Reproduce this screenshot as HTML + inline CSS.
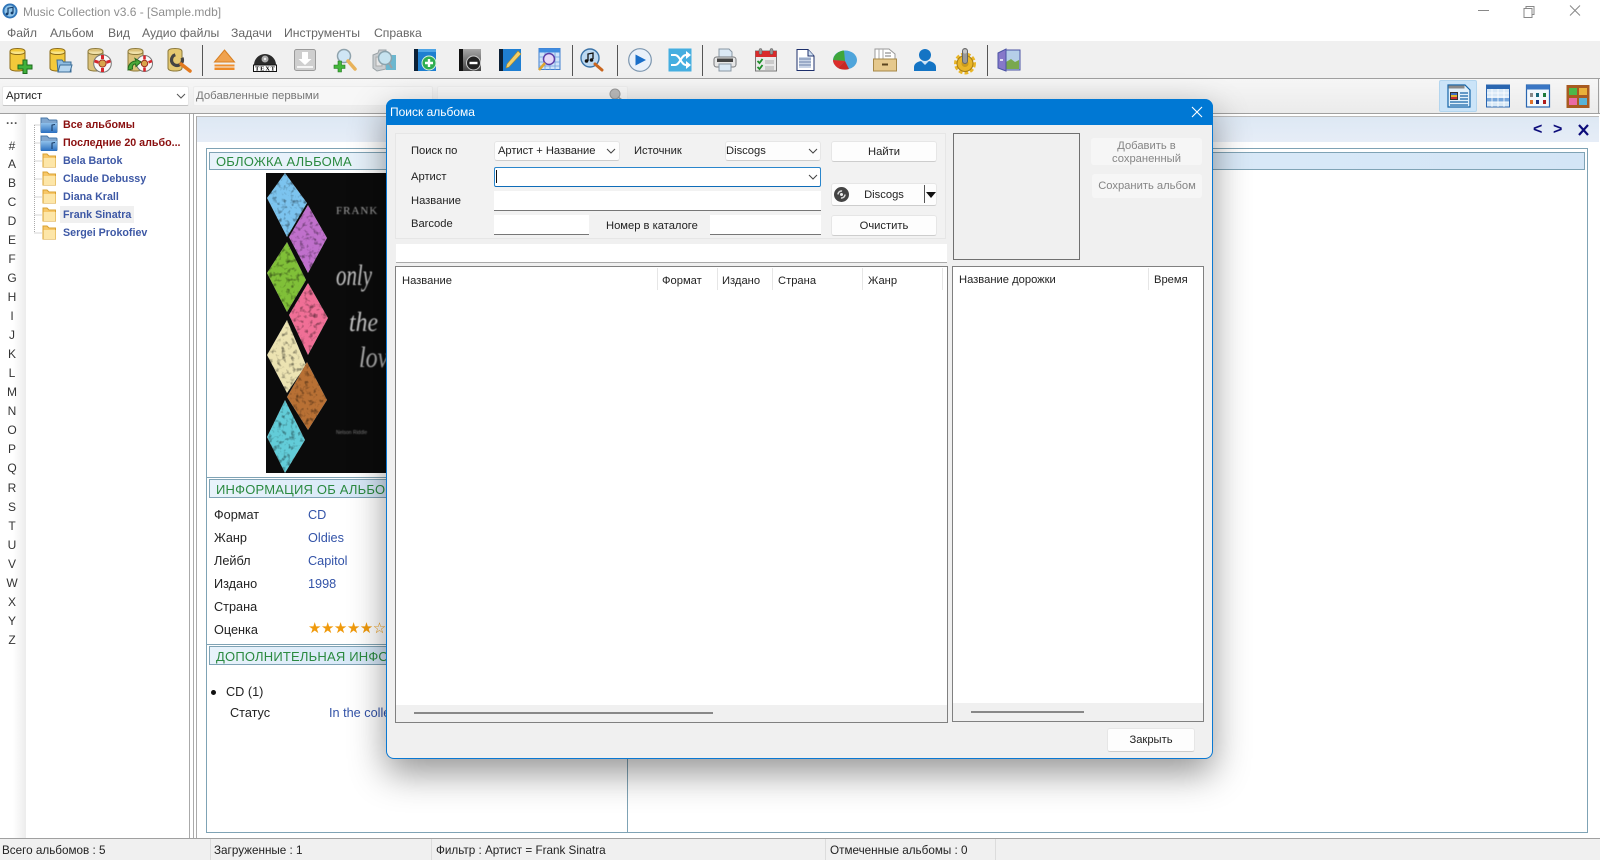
<!DOCTYPE html>
<html><head><meta charset="utf-8"><title>Music Collection</title>
<style>
html,body{margin:0;padding:0}
body{width:1600px;height:860px;overflow:hidden;background:#fff;position:relative;font-family:"Liberation Sans","Noto Sans CJK JP",sans-serif;font-size:12px;color:#222}
.a,.t,svg.i{position:absolute}
.t{white-space:nowrap;line-height:16px}
svg.i{width:24px;height:24px;top:48px;overflow:visible}
svg.r{top:84px}
.m{color:#666;font-size:12.2px;top:25px}
.sep{position:absolute;top:45px;height:31px;width:1px;background:#555}
.l{left:12px;width:0;text-align:center;font-size:12px;color:#333}
.l span{display:inline-block;transform:translateX(-50%);white-space:nowrap}
.tr{left:63px;font-weight:bold;font-size:10.7px}
.red{color:#8a0f0f}.bl{color:#3d58a5}
.hd{position:absolute;left:209px;border:1px solid #7fa3b5;background:linear-gradient(90deg,#e9f3fb,#d3e5f6);color:#2b8a40;font-size:13px;box-sizing:border-box;padding-left:6px;line-height:17px;letter-spacing:.2px;white-space:nowrap;overflow:hidden}
.k{left:214px;font-size:12.7px;color:#222}
.v{left:308px;font-size:12.7px;color:#3353a8}
.d{font-size:11.2px;color:#222}
.b{position:absolute;background:#fdfdfd;border:1px solid #e6e6e6;border-bottom-color:#cdcdcd;border-radius:3px;box-sizing:border-box;text-align:center;font-size:11.2px;color:#222}
.in{position:absolute;background:#fff;border-bottom:1px solid #777;box-sizing:border-box}
.chev{position:absolute;width:10px;height:6px}
.cs{position:absolute;top:268px;width:1px;height:22px;background:#e6e6e6}
.st{top:843px;font-size:11.7px;color:#222}
</style></head><body>

<!-- title bar -->
<svg class="a" style="left:2px;top:3px" width="16" height="16" viewBox="0 0 16 16"><circle cx="8" cy="8" r="7.5" fill="#2f74b8"/><circle cx="8" cy="8" r="5.6" fill="#8fc4ea"/><path d="M6 11V5.2l5-1v5.6" fill="none" stroke="#17406e" stroke-width="1.2"/><circle cx="5" cy="11" r="1.4" fill="#17406e"/><circle cx="10" cy="10" r="1.4" fill="#17406e"/></svg>
<div class="t" style="left:23px;top:4px;color:#8e8e8e;font-size:12px">Music Collection v3.6 - [Sample.mdb]</div>
<div class="t m" style="left:7px">Файл</div>
<div class="t m" style="left:50px">Альбом</div>
<div class="t m" style="left:108px">Вид</div>
<div class="t m" style="left:142px">Аудио файлы</div>
<div class="t m" style="left:231px">Задачи</div>
<div class="t m" style="left:284px">Инструменты</div>
<div class="t m" style="left:374px">Справка</div>
<svg class="a" style="left:1477px;top:4px" width="110" height="16" viewBox="0 0 110 16" fill="none" stroke="#888" stroke-width="1"><path d="M1 6.5H12"/><path d="M47 4.5h8v9h-8zM49 4.500V2.500h8v8h-2"/><path d="M93 1.500l10 10M103 1.500l-10 10"/></svg>

<!-- toolbar rows -->
<div class="a" style="left:0;top:41px;width:1600px;height:37px;background:#f0f0f0"></div>
<div class="a" style="left:0;top:78px;width:1600px;height:1px;background:#a0a0a0"></div>
<div class="a" style="left:0;top:79px;width:1600px;height:34px;background:linear-gradient(#f6f6f6,#ebebeb)"></div>
<div class="a" style="left:0;top:113px;width:1600px;height:1px;background:#a0a0a0"></div>
<div class="a" style="left:1598px;top:78px;width:1px;height:36px;background:#a0a0a0"></div>

<div class="a" style="left:2px;top:86px;width:187px;height:20px;background:#fff;border:1px solid #e8e8e8;border-bottom-color:#c4c4c4;box-sizing:border-box;border-radius:2px"></div>
<div class="t" style="left:6px;top:88px;font-size:11.4px;color:#222">Артист</div>
<svg class="chev" style="left:176px;top:93px" viewBox="0 0 10 6"><path d="M1 1l4 4 4-4" fill="none" stroke="#555"/></svg>
<div class="a" style="left:193px;top:86px;width:240px;height:20px;background:#f7f7f7;border:1px solid #ececec;box-sizing:border-box;border-radius:2px"></div>
<div class="t" style="left:196px;top:88px;font-size:11.4px;color:#777">Добавленные первыми</div>
<div class="a" style="left:437px;top:86px;width:191px;height:20px;background:#f7f7f7;border:1px solid #eeeeee;box-sizing:border-box;border-radius:2px"></div>
<svg class="a" style="left:608px;top:88px" width="16" height="12" viewBox="0 0 16 12"><circle cx="7" cy="6" r="5" fill="#bbb" stroke="#999"/><path d="M10 9l4 3" stroke="#999" stroke-width="1.5"/></svg>

<!-- toolbar icons -->
<svg class="i" style="left:6px" viewBox="0 0 24 24"><path d="M4 3.500c0-2 3-3 7.500-3S19 1.500 19 3.500V20c0 2-3 3-7.500 3S4 22 4 20z" fill="#f3c93a" stroke="#8d6c18"/><path d="M4 3.500c0 2 3 3 7.500 3S19 5.500 19 3.500" fill="#f9e58a" stroke="#8d6c18"/><path d="M17 12h4v5h5v4h-5v4.500h-4V21h-5v-4h5z" fill="#3fb13a" stroke="#1c6b1e"/></svg>
<svg class="i" style="left:48px" viewBox="0 0 24 24"><path d="M2 3.500c0-2 3-3 7.500-3S17 1.500 17 3.500V20c0 2-3 3-7.500 3S2 22 2 20z" fill="#f3c93a" stroke="#8d6c18"/><path d="M2 3.500c0 2 3 3 7.500 3S17 5.500 17 3.500" fill="#f9e58a" stroke="#8d6c18"/><path d="M9 12h5l1.500 2H23v10H10z" fill="#8fbce0" stroke="#3b6d97"/><path d="M10 24l2-7h12l-2 7z" fill="#b4d5ef" stroke="#3b6d97"/></svg>
<svg class="i" style="left:88px" viewBox="0 0 24 24"><path d="M0 3.500c0-2 3-3 7.500-3S15 1.500 15 3.500V20c0 2-3 3-7.500 3S0 22 0 20z" fill="#dcc27a" stroke="#8d7a3c"/><path d="M0 3.500c0 2 3 3 7.500 3S15 5.500 15 3.500" fill="#efe0a8" stroke="#8d7a3c"/><circle cx="14.500" cy="15.500" r="8.800" fill="#f8f8f8" stroke="#777"/><circle cx="14.500" cy="15.500" r="3.600" fill="#d9a54a" stroke="#a03020"/><path d="M14.500 7v4M14.500 24v-4M6.500 13l4 1.300M22.500 13l-4 1.300" stroke="#d7262c" stroke-width="3"/></svg>
<svg class="i" style="left:128px" viewBox="0 0 24 24"><path d="M0 3.500c0-2 3-3 7.500-3S15 1.500 15 3.500V20c0 2-3 3-7.500 3S0 22 0 20z" fill="#dcc27a" stroke="#8d7a3c"/><path d="M0 3.500c0 2 3 3 7.500 3S15 5.500 15 3.500" fill="#efe0a8" stroke="#8d7a3c"/><circle cx="16.500" cy="15.500" r="8" fill="#f8f8f8" stroke="#777"/><circle cx="16.500" cy="15.500" r="3.200" fill="#d9a54a" stroke="#a03020"/><path d="M16.500 7.500v4M16.500 23.500v-4M9 13l3.500 1.300M24 13l-3.500 1.300" stroke="#d7262c" stroke-width="2.600"/><path d="M0 22c0-5 3-9 8-9l-1-2.500 6 3.500-5 4.500-.5-2.500c-2.500 0-3.500 2-3 5z" fill="#4aa93a" stroke="#24691e"/></svg>
<svg class="i" style="left:168px" viewBox="0 0 24 24"><path d="M0 3.500c0-2 3-3 7-3s7 1 7 3V20c0 2-3 3-7 3s-7-1-7-3z" fill="#e4c870" stroke="#8d7a3c"/><circle cx="9" cy="12" r="5.500" fill="none" stroke="#444" stroke-width="3.200" stroke-dasharray="24 8"/><path d="M13 16l9 7" stroke="#e37a1f" stroke-width="3.500" stroke-linecap="round"/></svg>
<div class="sep" style="left:202px"></div>
<svg class="i" style="left:212px" viewBox="0 0 24 24"><path d="M12.500 2l10 12h-20z" fill="#f0a24e" stroke="#d77f22"/><rect x="2.500" y="16.500" width="20" height="2" fill="#ef8f2e"/><rect x="2.500" y="19.500" width="20" height="2.500" fill="#ee8a26"/></svg>
<svg class="i" style="left:253px" viewBox="0 0 24 24"><path d="M1 17a11 11 0 1 1 22 0z" fill="#2b2b2b"/><circle cx="12" cy="11" r="3.500" fill="#aaa"/><circle cx="12" cy="11" r="1.200" fill="#eee"/><rect x="0.500" y="17" width="23" height="6.500" fill="#fff" stroke="#111"/><text x="12" y="22.700" text-anchor="middle" font-family="Liberation Serif" font-weight="bold" font-size="6.500" fill="#000" textLength="20">TEXT</text></svg>
<svg class="i" style="left:293px" viewBox="0 0 24 24"><rect x="1.500" y="1.500" width="21" height="21" rx="2" fill="#cfcfcf" stroke="#9a9a9a"/><path d="M9 4h6v7h3.500L12 17l-6.500-6H9z" fill="#fff"/><rect x="4" y="18" width="16" height="2" fill="#f5f5f5"/></svg>
<svg class="i" style="left:333px" viewBox="0 0 24 24"><circle cx="11" cy="8" r="6.500" fill="#cfe6f5" stroke="#8fa3ad" stroke-width="1.500"/><path d="M15 13l7 8" stroke="#e8b25a" stroke-width="3.500" stroke-linecap="round"/><path d="M5 13h3.500v4H12v3.500H8.500V24H5v-3.500H1V17h4z" fill="#43b53a" stroke="#21761f" stroke-width=".6"/></svg>
<svg class="i" style="left:372px" viewBox="0 0 24 24"><path d="M1 7l5-2 1-3h7v19l-9 2-4-3z" fill="#c9cdd0" stroke="#9aa2a6"/><path d="M4 9h6v9H4z" fill="#e6e6e6" stroke="#aaa"/><rect x="14" y="7" width="10" height="15" fill="#6cb7cf"/><circle cx="13" cy="10" r="6.500" fill="#c6e3ef" stroke="#8aa3ad" stroke-width="1.500"/><path d="M17 15l3 5" stroke="#9aa2a6" stroke-width="2"/></svg>
<svg class="i" style="left:413px" viewBox="0 0 24 24"><rect x="1" y="1" width="22" height="22" fill="#1e7fd0"/><rect x="1" y="1" width="4" height="22" fill="#0b2036"/><rect x="5" y="1" width="18" height="3" fill="#4ea5e6"/><circle cx="16" cy="15" r="7" fill="#2fae50" stroke="#d8f0dc"/><path d="M16 11v8M12 15h8" stroke="#fff" stroke-width="2.400"/></svg>
<svg class="i" style="left:458px" viewBox="0 0 24 24"><defs><linearGradient id="gk" x1="0" y1="0" x2="0" y2="1"><stop offset="0" stop-color="#a8a8a8"/><stop offset="1" stop-color="#444"/></linearGradient></defs><rect x="1" y="1" width="22" height="22" fill="url(#gk)"/><rect x="1" y="1" width="4" height="22" fill="#111"/><circle cx="15.500" cy="15" r="7" fill="#222" stroke="#ccc"/><path d="M11.500 15h8" stroke="#fff" stroke-width="2.400"/></svg>
<svg class="i" style="left:498px" viewBox="0 0 24 24"><rect x="1" y="1" width="22" height="22" fill="#1f7fd2"/><rect x="1" y="1" width="4" height="22" fill="#0b2036"/><path d="M8 20l1-4L20 3l3 3-12 13z" fill="#f2cf6a" stroke="#a98a2c" stroke-width=".6"/></svg>
<svg class="i" style="left:537px" viewBox="0 0 24 24"><rect x="2" y="0.500" width="21" height="21" fill="#cfe3f8" stroke="#3f7fd0"/><rect x="2" y="0.500" width="21" height="4" fill="#3f8ce0"/><path d="M2 9h21M2 14h21M2 18h21M8 4v18M13 4v18M18 4v18" stroke="#6f9fdc" stroke-width=".8"/><circle cx="12" cy="11" r="5.500" fill="#e8d9f7" stroke="#5b3fa8" stroke-width="1.500"/><path d="M8 15l-6 7" stroke="#e0a52e" stroke-width="2.500"/></svg>
<svg class="i" style="left:580px" viewBox="0 0 24 24"><circle cx="10" cy="10" r="9" fill="#bcd9f2" stroke="#3c74a8" stroke-width="1.400"/><path d="M8 13V6l5-1v6" fill="none" stroke="#111" stroke-width="1.300"/><circle cx="6.500" cy="13" r="1.800" fill="#111"/><circle cx="11.500" cy="12" r="1.800" fill="#111"/><path d="M15 16l7 6" stroke="#c9661f" stroke-width="3" stroke-linecap="round"/></svg>
<div class="sep" style="left:572px"></div>
<div class="sep" style="left:617px"></div>
<svg class="i" style="left:628px" viewBox="0 0 24 24"><circle cx="12" cy="12" r="11.300" fill="#e9f1fa" stroke="#7b95ae" stroke-width="1.200"/><path d="M7.500 6.500L18 12 7.500 17.500z" fill="#1a6fc9"/></svg>
<svg class="i" style="left:668px" viewBox="0 0 24 24"><rect x="0.500" y="0.500" width="23" height="23" fill="#45aee0"/><path d="M3 7h4c5 0 6 10 11 10h1M3 17h4c5 0 6-10 11-10h1" fill="none" stroke="#fff" stroke-width="2"/><path d="M18 3l5 4-5 4zM18 13l5 4-5 4z" fill="#fff"/></svg>
<div class="sep" style="left:702px"></div>
<svg class="i" style="left:713px" viewBox="0 0 24 24"><path d="M6 1h10l3 3v7H6z" fill="#dbe8f4" stroke="#8a97a3"/><rect x="1" y="9" width="22" height="10" rx="2.500" fill="#e6e6e6" stroke="#77797c"/><rect x="4" y="10.500" width="16" height="3.500" fill="#444"/><rect x="6" y="16" width="12" height="7" fill="#dbe8f4" stroke="#8a97a3"/></svg>
<svg class="i" style="left:754px" viewBox="0 0 24 24"><rect x="1.500" y="3" width="21" height="20" fill="#e9e9e9" stroke="#777"/><rect x="1.500" y="3" width="21" height="6" fill="#d92b2b"/><rect x="5" y="0.500" width="3" height="6" rx="1.500" fill="#999" stroke="#555" stroke-width=".5"/><rect x="16" y="0.500" width="3" height="6" rx="1.500" fill="#999" stroke="#555" stroke-width=".5"/><path d="M3.500 13l2 2 3-4M3.500 19l2 2 3-4" fill="none" stroke="#1f8f2b" stroke-width="1.800"/><path d="M11 13h9M11 15h9M11 19h9M11 21h9" stroke="#aaa"/></svg>
<svg class="i" style="left:793px" viewBox="0 0 24 24"><path d="M4 1.500h11l6 6.500v14.500H4z" fill="#fff" stroke="#1d2f6b"/><path d="M15 1.500V8h6" fill="#cfe0f2" stroke="#1d2f6b"/><path d="M6 9h12v11H6z" fill="#c8d4e6"/><path d="M6 11h12M6 14h12M6 17h12" stroke="#6c82ab"/></svg>
<svg class="i" style="left:833px" viewBox="0 0 24 24"><ellipse cx="12" cy="12" rx="12" ry="9.500" fill="#4fa5db"/><path d="M12 13L11 2.500C6 3 1 6 0 12z" fill="#3fa63a"/><path d="M12 13L0 12c0 3 2 6 5 8z" fill="#dc2e2a"/><path d="M12 13L5 20c3 2 8 2 11 1z" fill="#c82825"/></svg>
<svg class="i" style="left:873px" viewBox="0 0 24 24"><path d="M2 1h14l6 5v8H2z" fill="#fff" stroke="#999"/><path d="M6 1v10M10 1v10" stroke="#aaa"/><path d="M12 5h6M12 8h6" stroke="#777"/><rect x="0.500" y="11" width="23" height="12" fill="#e6c98d" stroke="#a68848"/><rect x="9" y="15.500" width="6" height="2" fill="#5b4520"/></svg>
<svg class="i" style="left:913px" viewBox="0 0 24 24"><circle cx="12" cy="7" r="6" fill="#1474c4"/><path d="M1 23v-4c0-4 5-6 8-6h6c3 0 8 2 8 6v4z" fill="#1474c4"/><path d="M8 13l4 4 4-4z" fill="#cfe4f6"/></svg>
<svg class="i" style="left:953px" viewBox="0 0 24 24"><circle cx="12" cy="15.500" r="9" fill="none" stroke="#e9b628" stroke-width="4" stroke-dasharray="3.500 2"/><circle cx="12" cy="15.500" r="8" fill="#e9b628" stroke="#a67d16"/><circle cx="12" cy="15.500" r="3.500" fill="#c99a1e"/><rect x="9.500" y="0.500" width="5" height="15" rx="2.500" fill="#9a9a9a" stroke="#666"/><circle cx="12" cy="3.500" r="2" fill="#c6c6c6"/></svg>
<div class="sep" style="left:987px"></div>
<svg class="i" style="left:997px" viewBox="0 0 24 24"><rect x="8" y="2" width="15" height="20" fill="#b5cfe8" stroke="#4b54a5"/><path d="M9 14l5-3 4 3 4-2v9H9z" fill="#79a84f"/><path d="M1 5l8-4v22l-8-3z" fill="#8678c9" stroke="#4b54a5"/><path d="M3 12h3" stroke="#fff" stroke-width="1.500"/></svg>

<!-- view icons -->
<div class="a" style="left:1439px;top:80px;width:38px;height:32px;background:#cbe4f8;border:1px solid #b3d5ee;box-sizing:border-box;border-radius:2px"></div>
<svg class="i r" style="left:1447px" viewBox="0 0 24 24"><path d="M1 1h17l5 5v17H1z" fill="#e2f1fb" stroke="#1565a8" stroke-width="1.200"/><rect x="1.500" y="1.500" width="16" height="3" fill="#888"/><rect x="3" y="8" width="8" height="8" fill="#333"/><rect x="4" y="9" width="6" height="2" fill="#3f6fc4"/><rect x="4" y="11" width="6" height="2" fill="#e0b830"/><rect x="4" y="13" width="6" height="2" fill="#c83030"/><path d="M13 9h8M13 12h8M13 15h8M3 18h18M3 21h18" stroke="#1565a8" stroke-width="1.200"/></svg>
<svg class="i r" style="left:1486px" viewBox="0 0 24 24"><rect x="0.500" y="1" width="23" height="22" fill="#d8e8f6" stroke="#2a66b0"/><rect x="0.500" y="1" width="23" height="4" fill="#2a66b0"/><rect x="1" y="14" width="22" height="3.500" fill="#75a6dc"/><path d="M1 9h22M1 13h22M1 18h22M6 5v18M12 5v18M18 5v18" stroke="#fff" stroke-width=".8"/></svg>
<svg class="i r" style="left:1526px" viewBox="0 0 24 24"><rect x="0.500" y="1" width="23" height="22" fill="#f3f8fc" stroke="#2a66b0" stroke-width="1.200"/><rect x="0.500" y="1" width="23" height="4.500" fill="#3a76c4"/><rect x="4" y="9" width="3" height="4" fill="#888"/><rect x="10" y="9" width="3" height="4" fill="#17687c"/><rect x="17" y="9" width="3" height="4" fill="#1c7a3a"/><rect x="4" y="16" width="3" height="4" fill="#e0702a"/><rect x="10" y="16" width="3" height="4" fill="#1a2f80"/><rect x="17" y="16" width="3" height="4" fill="#b01c1c"/></svg>
<svg class="i r" style="left:1566px" viewBox="0 0 24 24"><rect x="0.500" y="1" width="23" height="23" fill="#a85a20"/><rect x="3" y="4" width="8" height="7" fill="#4cb84a"/><rect x="13" y="4" width="8" height="7" fill="#e9b13a"/><rect x="3" y="14" width="8" height="7" fill="#ea6aa5"/><rect x="13" y="14" width="8" height="7" fill="#58b3d6"/></svg>

<!-- alphabet strip -->
<div class="a" style="left:0;top:114px;width:26px;height:724px;background:linear-gradient(90deg,#fff 50%,#ececec)"></div>
<div class="t l" style="top:115px;font-weight:bold;color:#555"><span>···</span></div>
<div class="t l" style="top:138px"><span>#</span></div>
<div class="t l" style="top:156px"><span>A</span></div><div class="t l" style="top:175px"><span>B</span></div><div class="t l" style="top:194px"><span>C</span></div><div class="t l" style="top:213px"><span>D</span></div><div class="t l" style="top:232px"><span>E</span></div><div class="t l" style="top:251px"><span>F</span></div><div class="t l" style="top:270px"><span>G</span></div><div class="t l" style="top:289px"><span>H</span></div><div class="t l" style="top:308px"><span>I</span></div><div class="t l" style="top:327px"><span>J</span></div><div class="t l" style="top:346px"><span>K</span></div><div class="t l" style="top:365px"><span>L</span></div><div class="t l" style="top:384px"><span>M</span></div><div class="t l" style="top:403px"><span>N</span></div><div class="t l" style="top:422px"><span>O</span></div><div class="t l" style="top:441px"><span>P</span></div><div class="t l" style="top:460px"><span>Q</span></div><div class="t l" style="top:480px"><span>R</span></div><div class="t l" style="top:499px"><span>S</span></div><div class="t l" style="top:518px"><span>T</span></div><div class="t l" style="top:537px"><span>U</span></div><div class="t l" style="top:556px"><span>V</span></div><div class="t l" style="top:575px"><span>W</span></div><div class="t l" style="top:594px"><span>X</span></div><div class="t l" style="top:613px"><span>Y</span></div><div class="t l" style="top:632px"><span>Z</span></div>

<!-- tree -->
<svg class="a" style="left:30px;top:117px" width="32" height="124" viewBox="0 0 32 124">
<defs><linearGradient id="bf" x1="0" y1="0" x2="0" y2="1"><stop offset="0" stop-color="#8fc0ea"/><stop offset="1" stop-color="#2a6fc0"/></linearGradient></defs>
<path d="M4.500 8V116M4.500 8H11M4.500 26H11M4.500 44H12M4.500 62H12M4.500 80H12M4.500 98H12M4.500 116H12" stroke="#aaa" fill="none" stroke-dasharray="1 1"/>
<path d="M11 1h6l2 2h7c1 0 1 1 1 1v11H11z" fill="#7fa6cf" stroke="#4a78a8"/><path d="M11 6h16v10H11z" fill="url(#bf)"/><path d="M22 14V8l3-.5" stroke="#14365f" fill="none"/>
<path d="M11 19h6l2 2h7c1 0 1 1 1 1v11H11z" fill="#7fa6cf" stroke="#4a78a8"/><path d="M11 24h16v10H11z" fill="url(#bf)"/><path d="M22 32v-6l3-.5" stroke="#14365f" fill="none"/>
<path d="M13 37h4l2 2h6.500v11H13z" fill="#f7c768" stroke="#d8a030"/><rect x="13.500" y="41" width="12" height="9" fill="#fde6a8"/>
<path d="M13 55h4l2 2h6.500v11H13z" fill="#f7c768" stroke="#d8a030"/><rect x="13.500" y="59" width="12" height="9" fill="#fde6a8"/>
<path d="M13 73h4l2 2h6.500v11H13z" fill="#f7c768" stroke="#d8a030"/><rect x="13.500" y="77" width="12" height="9" fill="#fde6a8"/>
<path d="M13 91h4l2 2h6.500v11H13z" fill="#f7c768" stroke="#d8a030"/><rect x="13.500" y="95" width="12" height="9" fill="#fde6a8"/>
<path d="M13 109h4l2 2h6.500v11H13z" fill="#f7c768" stroke="#d8a030"/><rect x="13.500" y="113" width="12" height="9" fill="#fde6a8"/>
</svg>
<div class="a" style="left:60px;top:206px;width:74px;height:17px;background:#f0f0f0"></div>
<div class="t tr red" style="top:117px">Все альбомы</div>
<div class="t tr red" style="top:135px">Последние 20 альбо...</div>
<div class="t tr bl" style="top:153px">Bela Bartok</div>
<div class="t tr bl" style="top:171px">Claude Debussy</div>
<div class="t tr bl" style="top:189px">Diana Krall</div>
<div class="t tr bl" style="top:207px">Frank Sinatra</div>
<div class="t tr bl" style="top:225px">Sergei Prokofiev</div>

<!-- splitters -->
<div class="a" style="left:189px;top:114px;width:1px;height:724px;background:#aaa"></div>
<div class="a" style="left:193px;top:114px;width:1px;height:724px;background:#aaa"></div>
<div class="a" style="left:196px;top:116px;width:1px;height:722px;background:#aaa"></div>

<!-- right pane -->
<div class="a" style="left:197px;top:116px;width:1402px;height:26px;background:linear-gradient(#dde8f4,#e6edf7);border-top:1px solid #bbb;box-sizing:border-box"></div>
<div class="t" style="left:1533px;top:122px;font-weight:bold;font-size:16px;color:#0c0c7a">&lt;</div>
<div class="t" style="left:1553px;top:122px;font-weight:bold;font-size:16px;color:#0c0c7a">&gt;</div>
<svg class="a" style="left:1578px;top:124px" width="11" height="12" viewBox="0 0 11 12"><path d="M1 1l9 10M10 1L1 11" stroke="#0c0c7a" stroke-width="2.200"/></svg>
<div class="a" style="left:206px;top:148px;width:1382px;height:685px;border:1px solid #7fa3b5;box-sizing:border-box"></div>
<div class="a" style="left:627px;top:650px;width:1px;height:183px;background:#7fa3b5"></div>
<div class="hd" style="top:152px;width:1376px;height:18px">ОБЛОЖКА АЛЬБОМА</div>

<svg class="a" style="left:266px;top:173px" width="125" height="300" viewBox="266 173 125 300">
<defs>
<filter id="n" x="0" y="0" width="100%" height="100%" color-interpolation-filters="sRGB"><feTurbulence type="fractalNoise" baseFrequency=".22" numOctaves="2" seed="4" result="t"/><feColorMatrix in="t" type="matrix" values="1.300 0 0 0 .35 1.300 0 0 0 .35 1.300 0 0 0 .35 0 0 0 0 1" result="g"/><feBlend in="SourceGraphic" in2="g" mode="multiply" result="m"/><feComposite in="m" in2="SourceGraphic" operator="in"/></filter>
<filter id="s"><feGaussianBlur stdDeviation=".5"/></filter>
</defs>
<rect x="266" y="173" width="125" height="300" fill="#0b0b0b"/>
<g filter="url(#n)">
<polygon points="285,173 267,198 287,237 307,203" fill="#7cc4ef"/>
<polygon points="308,205 289,237 308,273 327,238" fill="#c070cc"/>
<polygon points="287,242 267,273 287,312 306,280" fill="#80c038"/>
<polygon points="308,283 289,315 308,355 328,318" fill="#f06f96"/>
<polygon points="287,320 267,355 287,393 306,365" fill="#ece3b2"/>
<polygon points="307,362 287,397 308,430 327,400" fill="#b87034"/>
<polygon points="285,400 267,437 285,473 305,440" fill="#62ccd8"/>
</g>
<g filter="url(#s)">
<text x="336" y="214" font-family="Liberation Serif" font-size="11" fill="#a0a0a0" letter-spacing="1">FRANK</text>
<text x="336" y="285" font-family="Liberation Serif" font-style="italic" font-size="30" fill="#c4c4c4" textLength="36" lengthAdjust="spacingAndGlyphs">only</text>
<text x="349" y="331" font-family="Liberation Serif" font-style="italic" font-size="27" fill="#c6c6c6" textLength="29" lengthAdjust="spacingAndGlyphs">the</text>
<text x="359" y="367" font-family="Liberation Serif" font-style="italic" font-size="30" fill="#b0b0b0" textLength="40" lengthAdjust="spacingAndGlyphs">love</text>
<text x="336" y="434" font-family="Liberation Sans" font-size="5" fill="#777">Nelson Riddle</text>
</g>
</svg>

<div class="a" style="left:207px;top:477px;width:190px;height:1px;background:#7fa3b5"></div>
<div class="hd" style="top:479px;width:190px;height:19px;line-height:19px">ИНФОРМАЦИЯ ОБ АЛЬБОМЕ</div>
<div class="t k" style="top:507px">Формат</div><div class="t v" style="top:507px">CD</div>
<div class="t k" style="top:530px">Жанр</div><div class="t v" style="top:530px">Oldies</div>
<div class="t k" style="top:553px">Лейбл</div><div class="t v" style="top:553px">Capitol</div>
<div class="t k" style="top:576px">Издано</div><div class="t v" style="top:576px">1998</div>
<div class="t k" style="top:599px">Страна</div>
<div class="t k" style="top:622px">Оценка</div>
<div class="t" style="left:308px;top:620px;color:#f09a0c;font-size:15px;letter-spacing:-.5px;font-family:'DejaVu Sans',sans-serif">★★★★★☆</div>
<div class="a" style="left:207px;top:644px;width:190px;height:1px;background:#7fa3b5"></div>
<div class="hd" style="top:646px;width:190px;height:19px;line-height:19px">ДОПОЛНИТЕЛЬНАЯ ИНФОРМАЦИЯ</div>
<div class="a" style="left:211px;top:690px;width:5px;height:5px;border-radius:50%;background:#111"></div>
<div class="t k" style="left:226px;top:684px">CD (1)</div>
<div class="t k" style="left:230px;top:705px">Статус</div>
<div class="t v" style="left:329px;top:705px">In the collection</div>

<!-- status bar -->
<div class="a" style="left:0;top:838px;width:1600px;height:22px;background:#f0f0f0;border-top:1px solid #a0a0a0;box-sizing:border-box"></div>
<div class="a" style="left:210px;top:839px;width:1px;height:21px;background:#dcdcdc"></div>
<div class="a" style="left:431px;top:839px;width:1px;height:21px;background:#dcdcdc"></div>
<div class="a" style="left:825px;top:839px;width:1px;height:21px;background:#dcdcdc"></div>
<div class="a" style="left:995px;top:839px;width:1px;height:21px;background:#dcdcdc"></div>
<div class="t st" style="left:2px">Всего альбомов : 5</div>
<div class="t st" style="left:214px">Загруженные : 1</div>
<div class="t st" style="left:436px">Фильтр : Артист = Frank Sinatra</div>
<div class="t st" style="left:830px">Отмеченные альбомы : 0</div>

<!-- dialog -->
<div class="a" style="left:386px;top:99px;width:827px;height:660px;background:#f0f0f0;border:1px solid #0a78d2;border-top:0;box-sizing:border-box;border-radius:8px;box-shadow:0 14px 36px rgba(0,0,0,.42)"></div>
<div class="a" style="left:386px;top:99px;width:827px;height:26px;background:#0078d4;border-radius:8px 8px 0 0"></div>
<div class="t" style="left:390px;top:104px;color:#fff;font-size:12px">Поиск альбома</div>
<svg class="a" style="left:1191px;top:106px" width="12" height="12" viewBox="0 0 12 12"><path d="M1 1l10 10M11 1L1 11" stroke="#fff" stroke-width="1.100"/></svg>

<div class="a" style="left:395px;top:133px;width:551px;height:106px;background:#f2f2f2;border:1px solid #e6e6e6;box-sizing:border-box"></div>
<div class="t d" style="left:411px;top:143px">Поиск по</div>
<div class="t d" style="left:411px;top:169px">Артист</div>
<div class="t d" style="left:411px;top:193px">Название</div>
<div class="t d" style="left:411px;top:216px">Barcode</div>
<div class="t d" style="left:634px;top:143px">Источник</div>
<div class="t d" style="left:606px;top:218px">Номер в каталоге</div>

<div class="b" style="left:494px;top:141px;width:126px;height:20px"></div>
<div class="t d" style="left:498px;top:143px;letter-spacing:-.05px">Артист + Название</div>
<svg class="chev" style="left:606px;top:148px" viewBox="0 0 10 6"><path d="M1 1l4 4 4-4" fill="none" stroke="#444"/></svg>
<div class="b" style="left:725px;top:141px;width:96px;height:20px"></div>
<div class="t d" style="left:726px;top:143px">Discogs</div>
<svg class="chev" style="left:808px;top:148px" viewBox="0 0 10 6"><path d="M1 1l4 4 4-4" fill="none" stroke="#444"/></svg>
<div class="b" style="left:831px;top:141px;width:106px;height:21px;line-height:20px">Найти</div>

<div class="a" style="left:494px;top:167px;width:327px;height:20px;background:#fff;border:1px solid #2a86cc;box-sizing:border-box;border-radius:2px;border-bottom-color:#0f6cb8"></div>
<div class="a" style="left:496px;top:170px;width:1px;height:13px;background:#111"></div>
<svg class="chev" style="left:808px;top:174px" viewBox="0 0 10 6"><path d="M1 1l4 4 4-4" fill="none" stroke="#444"/></svg>
<div class="in" style="left:494px;top:191px;width:327px;height:20px"></div>
<div class="in" style="left:494px;top:215px;width:95px;height:20px"></div>
<div class="in" style="left:710px;top:215px;width:111px;height:20px"></div>

<div class="b" style="left:831px;top:183px;width:106px;height:23px;line-height:22px">Discogs</div>
<svg class="a" style="left:833px;top:186px" width="17" height="17" viewBox="0 0 17 17"><circle cx="8.500" cy="8.500" r="7.500" fill="#444"/><circle cx="8.500" cy="8.500" r="3.500" fill="none" stroke="#ddd" stroke-width="1.500" stroke-dasharray="6 5"/><circle cx="8.500" cy="8.500" r="1.500" fill="#eee"/></svg>
<div class="a" style="left:924px;top:185px;width:1px;height:18px;background:#555"></div>
<div class="a" style="left:926px;top:192px;width:0;height:0;border-left:5px solid transparent;border-right:5px solid transparent;border-top:6px solid #111"></div>
<div class="b" style="left:831px;top:215px;width:106px;height:21px;line-height:20px">Очистить</div>

<div class="a" style="left:396px;top:244px;width:551px;height:19px;background:#fff;border-bottom:1px solid #aaa;box-sizing:border-box"></div>

<!-- album list -->
<div class="a" style="left:395px;top:266px;width:553px;height:457px;background:#fff;border:1px solid #808080;box-sizing:border-box"></div>
<div class="a" style="left:396px;top:705px;width:551px;height:17px;background:#f0f0f0"></div>
<div class="a" style="left:414px;top:712px;width:299px;height:2px;background:#888"></div>
<div class="cs" style="left:657px"></div><div class="cs" style="left:717px"></div><div class="cs" style="left:772px"></div><div class="cs" style="left:862px"></div><div class="cs" style="left:942px"></div>
<div class="t d" style="left:402px;top:273px">Название</div>
<div class="t d" style="left:662px;top:273px">Формат</div>
<div class="t d" style="left:722px;top:273px">Издано</div>
<div class="t d" style="left:778px;top:273px">Страна</div>
<div class="t d" style="left:868px;top:273px">Жанр</div>

<!-- cover box -->
<div class="a" style="left:953px;top:133px;width:127px;height:127px;background:#f0f0f0;border:1px solid #707070;box-sizing:border-box"></div>
<div class="b" style="left:1091px;top:138px;width:111px;height:27px;background:#f6f6f6;border:0;color:#858585;line-height:13px;padding-top:2px">Добавить в<br>сохраненный</div>
<div class="b" style="left:1092px;top:174px;width:110px;height:24px;background:#f6f6f6;border:0;color:#858585;line-height:25px">Сохранить альбом</div>

<!-- tracks -->
<div class="a" style="left:952px;top:266px;width:252px;height:456px;background:#fff;border:1px solid #808080;box-sizing:border-box"></div>
<div class="a" style="left:953px;top:703px;width:250px;height:18px;background:#f0f0f0"></div>
<div class="a" style="left:971px;top:711px;width:113px;height:2px;background:#888"></div>
<div class="cs" style="left:1148px"></div>
<div class="t d" style="left:959px;top:272px">Название дорожки</div>
<div class="t d" style="left:1154px;top:272px">Время</div>

<div class="b" style="left:1107px;top:728px;width:88px;height:24px;line-height:23px">Закрыть</div>
</body></html>
